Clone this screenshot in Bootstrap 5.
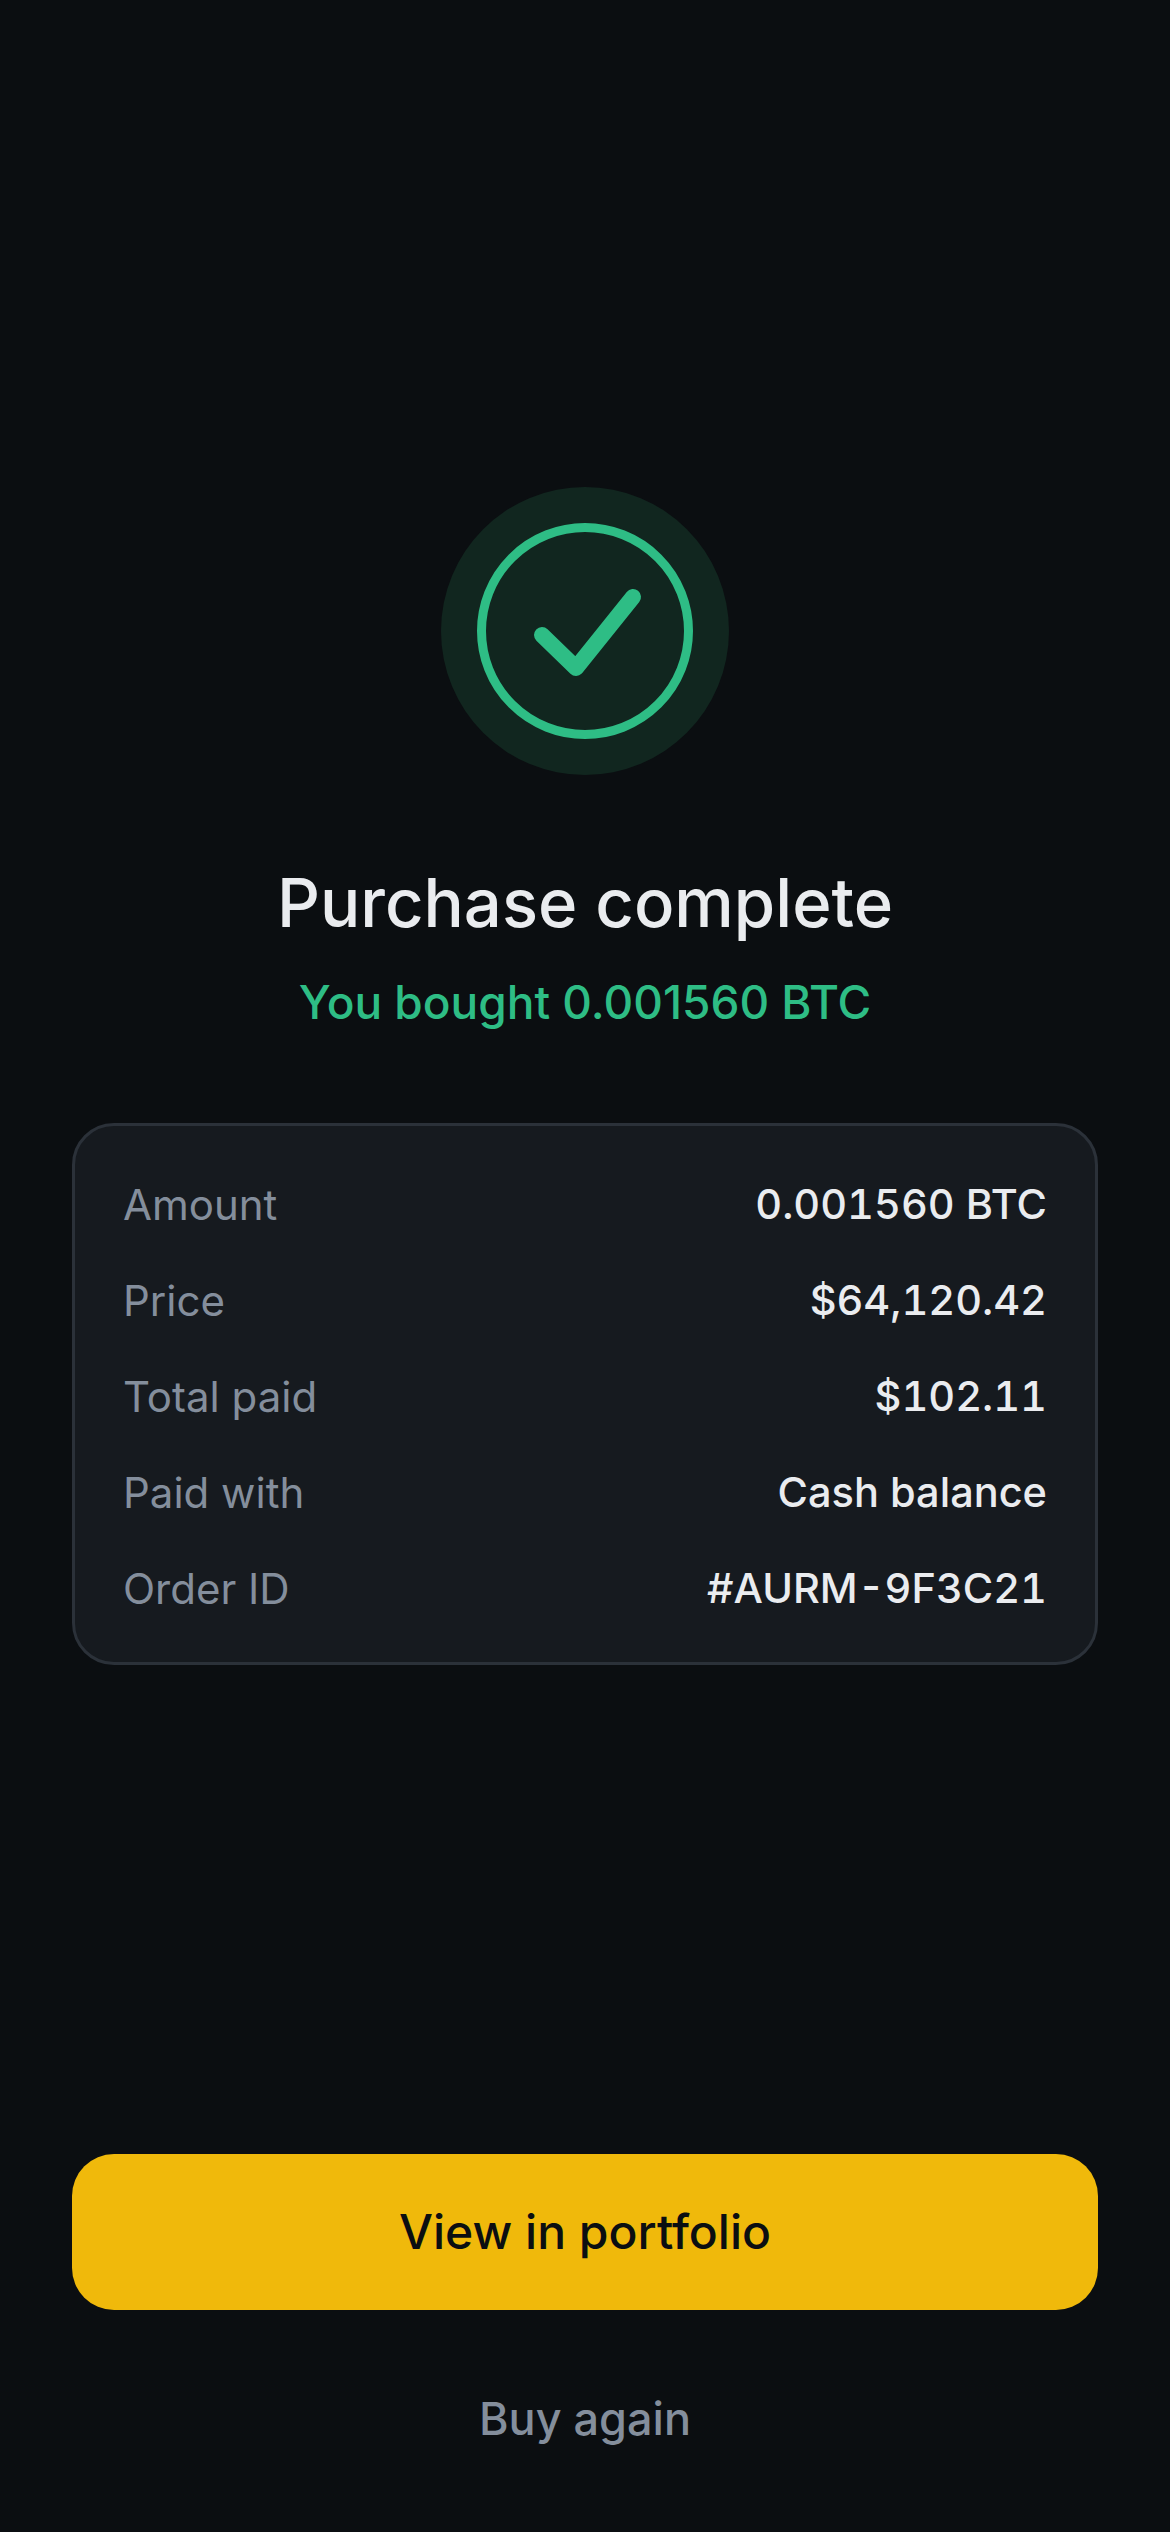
<!DOCTYPE html>
<html lang="en">
<head>
    <meta charset="UTF-8">
    <title>Purchase complete</title>
    <link href="https://cdn.jsdelivr.net/npm/bootstrap@5.3.0/dist/css/bootstrap.min.css" rel="stylesheet">
    <style>
        body { background: #0b0e11; font-family: Inter, sans-serif; }
        .screen { height: 2532px; padding: 487px 72px 0; }
        .halo { width: 288px; height: 288px; background: #11261f; }
        .title { font-size: 67px; line-height: 80px; font-weight: 500; color: #eaecef; margin-top: 88px; }
        .sub { font-size: 46px; line-height: 56px; font-weight: 500; color: #2ebd85; margin-top: 31px; }
        .details { margin-top: 93px; height: 542px; padding: 4px 48px 0; background: #161a1f; border: 3px solid #2b3139; border-radius: 42px; }
        .line { height: 96px; font-size: 41.5px; font-weight: 500; }
        .lbl { color: #848e9c; font-size: 42px; font-weight: 400; }
        .val { color: #eaecef; font-feature-settings: "tnum"; }
        .cta { height: 156px; margin-top: 489px; background: #f0b90b; border: 0; border-radius: 42px; color: #0b0e11; font-size: 48px; font-weight: 500; }
        .again { margin-top: 81px; font-size: 45px; line-height: 56px; font-weight: 500; color: #848e9c; }
    </style>
</head>
<body>
    <div class="screen d-flex flex-column">
        <div class="halo rounded-circle align-self-center d-flex align-items-center justify-content-center">
            <svg width="216" height="216" viewBox="0 0 216 216" fill="none" stroke="#2ebd85">
                <circle cx="108" cy="108" r="103.5" stroke-width="9"/>
                <path d="M65 112 L99 145 L156 74" stroke-width="16" stroke-linecap="round" stroke-linejoin="round"/>
            </svg>
        </div>
        <div class="title text-center">Purchase complete</div>
        <div class="sub text-center">You bought 0.001560 BTC</div>
        <div class="details d-flex flex-column justify-content-center">
            <div class="line d-flex justify-content-between align-items-center"><span class="lbl">Amount</span><span class="val">0.001560 BTC</span></div>
            <div class="line d-flex justify-content-between align-items-center"><span class="lbl">Price</span><span class="val">$64,120.42</span></div>
            <div class="line d-flex justify-content-between align-items-center"><span class="lbl">Total paid</span><span class="val">$102.11</span></div>
            <div class="line d-flex justify-content-between align-items-center"><span class="lbl">Paid with</span><span class="val">Cash balance</span></div>
            <div class="line d-flex justify-content-between align-items-center"><span class="lbl">Order ID</span><span class="val">#AURM-9F3C21</span></div>
        </div>
        <button class="btn cta w-100">View in portfolio</button>
        <div class="again text-center">Buy again</div>
    </div>
    <script src="https://cdn.jsdelivr.net/npm/bootstrap@5.3.0/dist/js/bootstrap.bundle.min.js"></script>
</body>
</html>
